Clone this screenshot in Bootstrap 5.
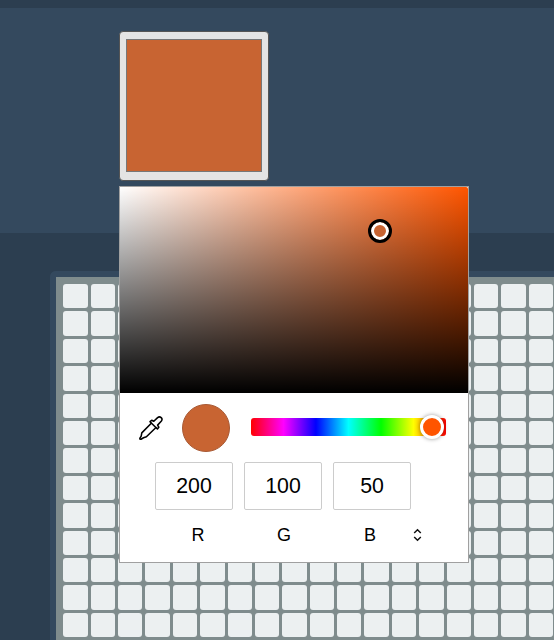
<!DOCTYPE html>
<html lang="en">
<head>
<meta charset="utf-8">
<meta name="viewport" content="width=device-width, initial-scale=1">
<title>Pixel Art</title>
<link href="https://cdn.jsdelivr.net/npm/bootstrap@5.3.0/dist/css/bootstrap.min.css" rel="stylesheet">
<style>
body{background:#2c3e50;font-family:"Liberation Sans",Arial,sans-serif;height:640px;color:#000}
.tool-panel{margin-top:8px;height:225px;background:#34495e;padding:23px 0 0 119px}
.swatch-btn{width:150px;height:150px;border:1px solid #555;border-radius:4px;background:#e4e4e4;padding:7px 6px 8px}
.swatch-fill{display:block;width:136px;height:133px;background:#c86432;border:1px solid #777}
.board-frame{margin:38px 0 0 50px;height:369px;border:6px solid #34495e;border-width:6px 0 0 6px;border-radius:6px 0 0 0}
.board{background:#7f8c8d;display:grid;grid-template-columns:repeat(18,24.4px);grid-auto-rows:24.4px;gap:3px;padding:7px 0 7px 7.2px}
.board span{background:#ecf0f1;border-radius:3px}
.picker{left:119px;top:186px;width:350px;height:377px;background:#fff;border:1px solid #a0a0a0;z-index:2}
.spectrum{height:206px;background:linear-gradient(to top,#000,transparent),linear-gradient(to right,#fff,transparent),#f50;border-radius:0 2px 0 0}
.spectrum-knob{left:248px;top:32px;width:24px;height:24px;border:3px solid #000;background:#c86432;box-shadow:inset 0 0 0 3px #fff}
.mix-row{height:69px;padding-left:19px}
.preview{width:48px;height:48px;background:#c86432;border:1px solid #a85a35;margin-left:19px}
.hue{width:195px;height:18px;margin:-1px 0 0 21px;border-radius:3px;background:linear-gradient(to right,#f00,#f0f 16.7%,#00f 33.3%,#0ff 50%,#0f0 66.7%,#ff0 83.3%,#f00)}
.hue-knob{left:169px;top:-3px;width:24px;height:24px;border:3px solid #fff;background:#f50;box-shadow:0 0 4px rgba(0,0,0,.4)}
.fields{gap:11px;padding-left:35px}
.fields input{width:78px;height:48px;border:1px solid #ccc;border-radius:2px;font-size:21.3px;text-align:center;padding:0;color:#000;background:#fff}
.labels{padding-left:35px;height:50px;font-size:18px}
.labels span{width:86px;text-align:center}
</style>
</head>
<body class="overflow-hidden position-relative">
<section class="tool-panel">
  <button class="swatch-btn d-block" aria-label="Color"><span class="swatch-fill"></span></button>
</section>
<main class="board-frame overflow-hidden"><div class="board" id="board"></div></main>

<div class="picker position-absolute">
  <div class="spectrum position-relative"><div class="spectrum-knob position-absolute rounded-circle"></div></div>
  <div class="mix-row d-flex align-items-center">
    <svg width="24" height="24" viewBox="0 0 24 24" fill="none" stroke="#000" stroke-width="1.55" stroke-linejoin="round" stroke-linecap="round">
      <path d="M12.3 7.2 2.8 16.9 2.2 20.1.9 22.1C.7 23 1.2 23.4 2 23.2L4.5 21.8 7.4 20.8 17 11.5"/>
      <path d="M11 5.7 12.7 4.3 14.8 5.3 18.6 1.6C21.2-.3 24.2 2.5 22.4 5L18.6 9.1 19.8 11.2 18.4 13Z"/>
    </svg>
    <div class="preview rounded-circle"></div>
    <div class="hue position-relative"><div class="hue-knob position-absolute rounded-circle"></div></div>
  </div>
  <div class="fields d-flex">
    <input value="200" aria-label="Red"><input value="100" aria-label="Green"><input value="50" aria-label="Blue">
  </div>
  <div class="labels d-flex align-items-center">
    <span>R</span><span>G</span><span>B</span>
    <svg width="9" height="14" viewBox="0 0 9 14" fill="none" stroke="#111" stroke-width="1.5"><path d="M1.2 5 4.5 1.8 7.8 5M1.2 9 4.5 12.2 7.8 9"/></svg>
  </div>
</div>
<script src="https://cdn.jsdelivr.net/npm/bootstrap@5.3.0/dist/js/bootstrap.bundle.min.js"></script>
<script>
const board = document.getElementById('board');
for (let i = 0; i < 18 * 14; i++) board.appendChild(document.createElement('span'));
</script>
</body>
</html>
